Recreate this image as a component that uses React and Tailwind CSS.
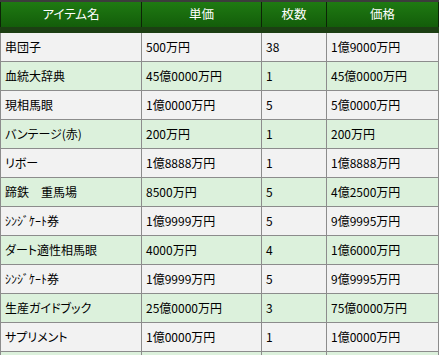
const rows = [
  ["串団子", "500万円", "38", "1億9000万円"],
  ["血統大辞典", "45億0000万円", "1", "45億0000万円"],
  ["現相馬眼", "1億0000万円", "5", "5億0000万円"],
  ["バンテージ(赤)", "200万円", "1", "200万円"],
  ["リボー", "1億8888万円", "1", "1億8888万円"],
  ["蹄鉄　重馬場", "8500万円", "5", "4億2500万円"],
  ["ｼﾝｼﾞｹｰﾄ券", "1億9999万円", "5", "9億9995万円"],
  ["ダート適性相馬眼", "4000万円", "4", "1億6000万円"],
  ["ｼﾝｼﾞｹｰﾄ券", "1億9999万円", "5", "9億9995万円"],
  ["生産ガイドブック", "25億0000万円", "3", "75億0000万円"],
  ["サプリメント", "1億0000万円", "1", "1億0000万円"],
  ["", "", "", ""],
];

const headers = ["アイテム名", "単価", "枚数", "価格"];

const cols = "grid grid-cols-[140px_119px_64px_111px] gap-x-px px-px";

export default function App() {
  return (
    <div
      className="w-[439px] h-[355px] overflow-hidden bg-white text-[12px] leading-none [font-feature-settings:'palt']"
      style={{ fontFamily: '"Noto Sans CJK JP", "MS Gothic", sans-serif' }}
    >
      <div className="border-t-2 border-[#3c3c3c] bg-[#0c2407]">
        <div className={`${cols} h-[25px]`}>
          {headers.map((h) => (
            <div
              key={h}
              className="flex items-center justify-center bg-gradient-to-b from-[#1f7a12] to-[#135d0a] text-white text-[12.5px]"
            >
              {h}
            </div>
          ))}
        </div>
        <div className="h-[6px] bg-[#1c3f13]" />
      </div>

      <div className="flex flex-col gap-y-px bg-[#8c8c8c]">
        {rows.map((r, i) => (
          <div key={i} className={`${cols} h-[28px]`}>
            {r.map((c, j) => (
              <div
                key={j}
                className={`flex items-center pl-[4px] text-black ${
                  i % 2 === 0 ? "bg-[#f2f2f2]" : "bg-[#dcf1dc]"
                }`}
              >
                {c}
              </div>
            ))}
          </div>
        ))}
      </div>
    </div>
  );
}
